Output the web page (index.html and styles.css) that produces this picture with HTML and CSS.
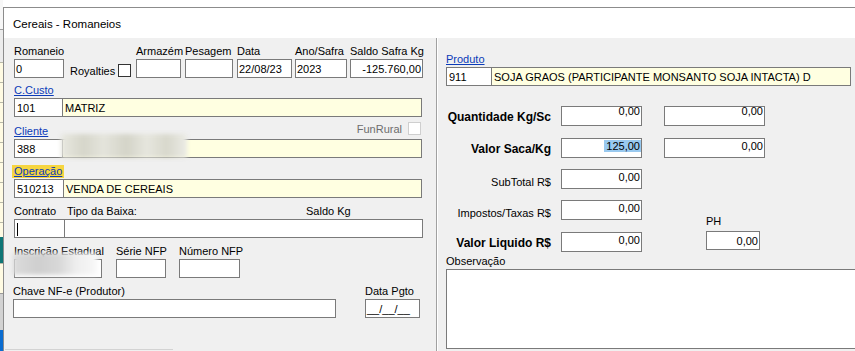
FILE: index.html
```html
<!DOCTYPE html>
<html>
<head>
    <meta charset="UTF-8">
    <meta name="viewport" content="width=device-width, initial-scale=1.0">
    <title>Cereais - Romaneios</title>
    <link rel="stylesheet" href="styles.css">
</head>
<body>
<div class="screen">
    <!-- pedaço da janela de trás -->
    <div class="strip">
        <div class="sg sg-top"></div>
        <div class="sg sg-gray"></div>
        <div class="sg sg-yel"></div>
        <div class="sg sg-yel"></div>
        <div class="sg sg-yel"></div>
        <div class="sg sg-yel"></div>
        <div class="sg sg-yel"></div>
        <div class="sg sg-yel"></div>
        <div class="sg sg-yel"></div>
        <div class="sg sg-yel"></div>
        <div class="sg sg-yel short"></div>
        <div class="sg sg-teal"></div>
        <div class="sg sg-yel tall"></div>
        <div class="sg sg-dark"></div>
        <div class="sg sg-blue"></div>
    </div>

    <div class="window">
        <div class="titlebar">Cereais - Romaneios</div>
        <div class="client">
            <div class="left">
                <div class="row">
                    <div class="field f-rom">
                        <div class="lbl">Romaneio</div>
                        <div class="box">0</div>
                    </div>
                    <div class="royal">
                        <span class="lbl">Royalties</span>
                        <span class="chk"></span>
                    </div>
                    <div class="field f-arm">
                        <div class="lbl">Armazém</div>
                        <div class="box"></div>
                    </div>
                    <div class="field f-pes">
                        <div class="lbl">Pesagem</div>
                        <div class="box"></div>
                    </div>
                    <div class="field f-data">
                        <div class="lbl">Data</div>
                        <div class="box">22/08/23</div>
                    </div>
                    <div class="field f-ano">
                        <div class="lbl">Ano/Safra</div>
                        <div class="box">2023</div>
                    </div>
                    <div class="field f-saldo">
                        <div class="lbl">Saldo Safra Kg</div>
                        <div class="box num">-125.760,00</div>
                    </div>
                </div>

                <div class="group g-custo">
                    <div class="lbl"><span class="link">C.Custo</span></div>
                    <div class="combo">
                        <div class="box code">101</div>
                        <div class="box yellow desc">MATRIZ</div>
                    </div>
                </div>

                <div class="group g-cliente">
                    <div class="lbl-row">
                        <span class="lbl link">Cliente</span>
                        <div class="funrural">
                            <span class="lbl">FunRural</span>
                            <span class="chk off"></span>
                        </div>
                    </div>
                    <div class="combo">
                        <div class="box code">388</div>
                        <div class="box yellow desc"></div>
                    </div>
                    <div class="blur blur-cliente"></div>
                </div>

                <div class="group g-oper">
                    <div class="lbl"><span class="link hl">Operação</span></div>
                    <div class="combo">
                        <div class="box code wide">510213</div>
                        <div class="box yellow desc">VENDA DE CEREAIS</div>
                    </div>
                </div>

                <div class="row g-contrato">
                    <div class="field f-contrato">
                        <div class="lbl">Contrato</div>
                        <div class="box"><span class="caret"></span></div>
                    </div>
                    <div class="field f-tipo">
                        <div class="lbl"><span class="tipo-lbl">Tipo da Baixa:</span>Saldo Kg</div>
                        <div class="box"></div>
                    </div>
                </div>

                <div class="row g-insc">
                    <div class="field f-insc">
                        <div class="lbl">Inscrição Estadual</div>
                        <div class="box"></div>
                        <div class="blur blur-insc"></div>
                    </div>
                    <div class="field f-serie">
                        <div class="lbl">Série NFP</div>
                        <div class="box"></div>
                    </div>
                    <div class="field f-numero">
                        <div class="lbl">Número NFP</div>
                        <div class="box"></div>
                    </div>
                </div>

                <div class="row g-chave">
                    <div class="field f-chave">
                        <div class="lbl">Chave NF-e (Produtor)</div>
                        <div class="box"></div>
                    </div>
                    <div class="field f-pgto">
                        <div class="lbl">Data Pgto</div>
                        <div class="box">__/__/__</div>
                    </div>
                </div>

                <div class="tabline"></div>
            </div>

            <div class="sep"></div>

            <div class="right">
                <div class="group">
                    <div class="lbl"><span class="link">Produto</span></div>
                    <div class="combo">
                        <div class="box code prod">911</div>
                        <div class="box yellow desc prod">SOJA GRAOS (PARTICIPANTE MONSANTO SOJA INTACTA) D</div>
                    </div>
                </div>

                <div class="nrow r1">
                    <div class="nlabel bold">Quantidade Kg/Sc</div>
                    <div class="nbox col1 top">0,00</div>
                    <div class="nbox col2 top">0,00</div>
                </div>
                <div class="nrow r2">
                    <div class="nlabel bold">Valor Saca/Kg</div>
                    <div class="nbox col1 selbox"><span class="sel">125,00</span></div>
                    <div class="nbox col2">0,00</div>
                </div>
                <div class="nrow r3">
                    <div class="nlabel">SubTotal R$</div>
                    <div class="nbox col1">0,00</div>
                </div>
                <div class="nrow r4">
                    <div class="nlabel">Impostos/Taxas R$</div>
                    <div class="nbox col1">0,00</div>
                </div>
                <div class="nrow r5">
                    <div class="nlabel bold">Valor Liquido R$</div>
                    <div class="nbox col1">0,00</div>
                    <div class="ph">
                        <div class="lbl">PH</div>
                        <div class="box num">0,00</div>
                    </div>
                </div>

                <div class="group g-obs">
                    <div class="lbl">Observação</div>
                    <div class="memo"></div>
                </div>
            </div>
        </div>
    </div>
</div>
</body>
</html>
```

FILE: styles.css
```css
* {
    box-sizing: border-box;
}
html, body {
    margin: 0;
}
body {
    background: #fff;
    font-family: "Liberation Sans", Arial, sans-serif;
    font-size: 11px;
    color: #000;
    overflow: hidden;
}
.screen {
    display: flex;
    width: 855px;
    height: 351px;
    overflow: hidden;
}

/* faixa da janela de trás */
.strip {
    width: 3px;
    flex: none;
    display: flex;
    flex-direction: column;
}
.sg {
    flex: none;
}
.sg-top {
    height: 29px;
    background: #f7f7f7;
}
.sg-gray {
    height: 33px;
    background: #ececec;
    border-top: 1px solid #a0a0a0;
}
.sg-yel {
    height: 20px;
    background: #fffbe3;
    border-top: 1px solid #b8b8a8;
}
.sg-yel.short {
    height: 15px;
}
.sg-yel.tall {
    height: 30px;
}
.sg-teal {
    height: 26px;
    background: #0f7676;
}
.sg-dark {
    height: 37px;
    background: #d2d2d2;
    border-top: 1px solid #999;
}
.sg-blue {
    flex: 1;
    background: #0a6cd0;
}

/* janela */
.window {
    flex: 1;
    min-width: 0;
    margin-top: 7px;
    border-top: 1px solid #8c8c8c;
    border-left: 1px solid #8c8c8c;
    display: flex;
    flex-direction: column;
}
.titlebar {
    height: 30px;
    flex: none;
    background: #fff;
    font-size: 11.5px;
    line-height: 14px;
    padding: 9px 0 0 9px;
}
.client {
    flex: 1;
    display: flex;
    background: #f0f0f0;
}
.left {
    width: 432px;
    flex: none;
    padding: 7px 0 0 10px;
}
.sep {
    width: 2px;
    flex: none;
    border-left: 1px solid #a0a0a0;
    border-right: 1px solid #fff;
}
.right {
    flex: 1;
    min-width: 0;
    overflow: hidden;
    padding: 15px 0 0 8px;
}

/* campos */
.row {
    display: flex;
    align-items: flex-end;
}
.field {
    display: flex;
    flex-direction: column;
    flex: none;
}
.group {
    position: relative;
}
.lbl {
    height: 13px;
    line-height: 13px;
    white-space: nowrap;
}
.box {
    height: 19px;
    margin-top: 1px;
    border: 1px solid #7a7a7a;
    background: #fff;
    padding: 2px 1px 0 1px;
    line-height: 15px;
    white-space: nowrap;
    overflow: hidden;
}
.box.yellow {
    background: #ffffe1;
}
.box.num {
    text-align: right;
}
.link {
    color: #0b3bb8;
    text-decoration: underline;
}
.hl {
    display: inline-block;
    height: 13px;
    margin-left: -2px;
    padding: 0 2px;
    background: #f6d540;
}
.chk {
    display: block;
    width: 13px;
    height: 13px;
    border: 1px solid #333;
    background: #fff;
}
.chk.off {
    border-color: #cfcfcf;
}
.caret {
    display: block;
    width: 1px;
    height: 13px;
    margin: 1px 0 0 1px;
    background: #000;
}

.f-rom { width: 50px; }
.royal {
    width: 61px;
    margin-left: 6px;
    display: flex;
    align-items: flex-end;
    justify-content: space-between;
}
.royal .chk {
    margin-bottom: 1px;
}
.f-arm { width: 45px; margin-left: 5px; }
.f-pes { width: 48px; margin-left: 4px; }
.f-data { width: 55px; margin-left: 4px; }
.f-ano { width: 52px; margin-left: 3px; }
.f-saldo { width: 73px; margin-left: 3px; }

.combo {
    display: flex;
    width: 408px;
}
.combo .code {
    width: 49px;
    flex: none;
}
.combo .code.wide {
    width: 50px;
}
.combo .desc {
    flex: 1;
    margin-left: -1px;
}
.combo .box {
    padding-left: 2px;
}
.g-custo { margin-top: 6px; }
.g-cliente { margin-top: 8px; }
.g-oper { margin-top: 7px; }
.g-contrato { margin-top: 7px; }
.g-insc { margin-top: 7px; }
.g-chave { margin-top: 7px; }

.lbl-row {
    display: flex;
    width: 408px;
    height: 13px;
}
.funrural {
    margin-left: auto;
    margin-right: 1px;
    margin-top: -3px;
    display: flex;
    align-items: flex-start;
}
.funrural .lbl {
    margin-top: 1px;
    margin-right: 6px;
    color: #6d6d6d;
}

.blur {
    position: absolute;
    filter: blur(2px);
}
.blur-cliente {
    left: 47px;
    top: 9px;
    width: 126px;
    height: 24px;
    background: linear-gradient(90deg, #e8e8e1, #d6d6ca 18%, #e4e4dc 34%, #d4d4c8 52%, #e6e6de 68%, #d8d8cc 84%, #ebebe5);
}
.f-insc {
    position: relative;
    width: 88px;
}
.blur-insc {
    left: -1px;
    top: 8px;
    width: 84px;
    height: 22px;
    background: linear-gradient(90deg, #dcdcdc, #cfcfcf 30%, #d8d8d8 55%, #eeeeee 75%, #f8f8f8);
}
.f-serie { width: 50px; margin-left: 14px; }
.f-numero { width: 61px; margin-left: 13px; }

.f-contrato { width: 51px; }
.f-tipo { width: 359px; margin-left: -1px; }
.f-tipo .lbl {
    padding-left: 3px;
}
.tipo-lbl {
    display: inline-block;
    width: 239px;
}

.f-chave { width: 323px; margin-left: -1px; }
.f-pgto { width: 55px; margin-left: 29px; }

.tabline {
    width: 168px;
    margin: 31px 0 0 -9px;
    border-top: 1px solid #d3d3d3;
}

/* lado direito */
.combo .code.prod {
    width: 46px;
}
.combo .desc.prod {
    flex: none;
    width: 360px;
}
.nrow {
    display: flex;
    align-items: flex-start;
    height: 20px;
}
.r1 { margin-top: 20px; }
.r2 { margin-top: 12px; }
.r3 { margin-top: 11px; }
.r4 { margin-top: 11px; }
.r5 { margin-top: 12px; }
.nlabel {
    width: 105px;
    flex: none;
    text-align: right;
    white-space: nowrap;
    line-height: 13px;
    padding-top: 7px;
}
.nlabel.bold {
    font-weight: bold;
    font-size: 12px;
    padding-top: 5px;
}
.nbox {
    height: 20px;
    flex: none;
    border: 1px solid #7a7a7a;
    background: #fff;
    text-align: right;
    padding: 1px 1px 0 0;
    line-height: 13px;
    white-space: nowrap;
    overflow: hidden;
}
.nbox.top {
    line-height: 7px;
}
.col1 {
    width: 81px;
    margin-left: 10px;
}
.col2 {
    width: 101px;
    margin-left: 22px;
}
.selbox {
    padding-right: 0;
}
.sel {
    background: #99c9ef;
    padding: 0 1px 0 2px;
}
.ph {
    width: 54px;
    margin-left: 64px;
    margin-top: -17px;
    display: flex;
    flex-direction: column;
}
.ph .box {
    margin-top: 3px;
}
.g-obs {
    margin-top: 3px;
}
.memo {
    width: 420px;
    height: 80px;
    margin-top: 1px;
    border: 1px solid #7a7a7a;
    background: #fff;
}
```
